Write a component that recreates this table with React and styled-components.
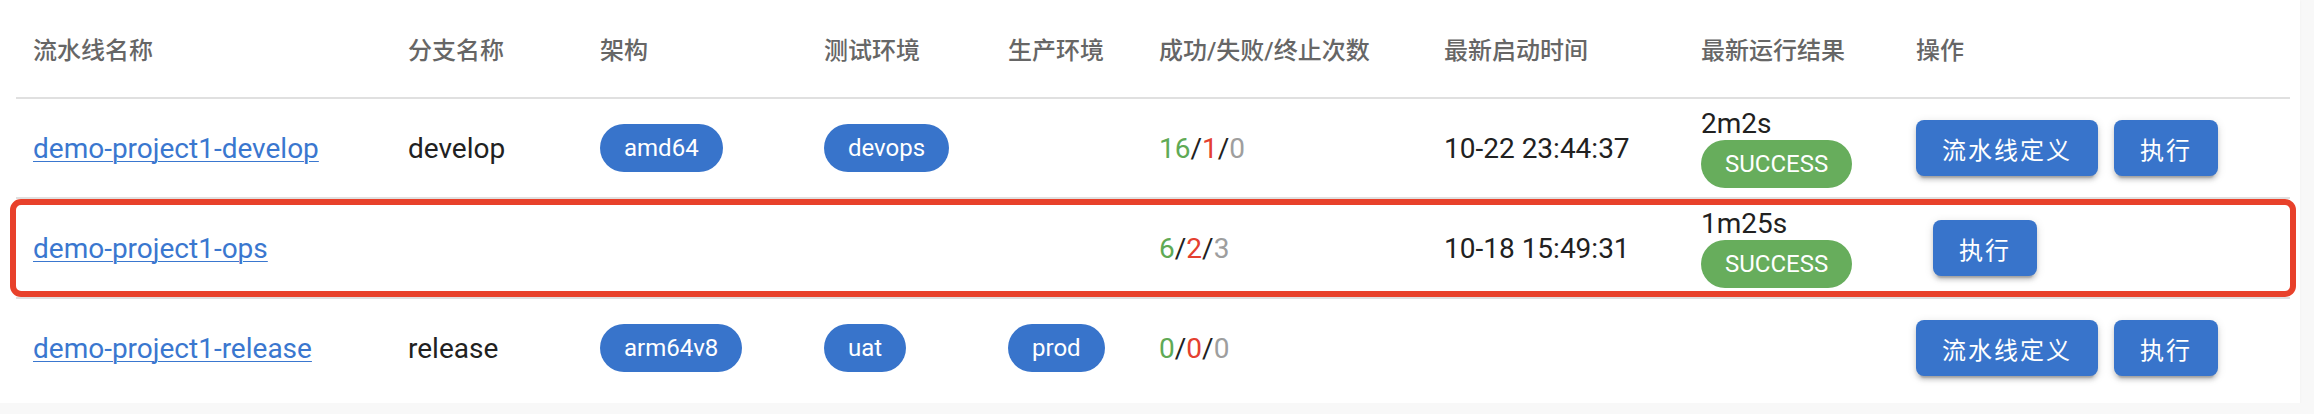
import React from "react";
import styled, { createGlobalStyle } from "styled-components";

const GlobalStyle = createGlobalStyle`
  html, body { margin: 0; padding: 0; background: #f8f8f8; }
  body { font-family: Roboto, "Noto Sans CJK SC", "Noto Sans", sans-serif; }
  * { box-sizing: border-box; }
`;

const COLS = "375px 192px 224px 184px 151px 285px 257px 215px 1fr";

const Card = styled.div`
  width: 2300px;
  background: #ffffff;
  padding: 0 10px 6px 16px;
  box-shadow: 0 1px 3px rgba(0, 0, 0, 0.04);
`;

const Table = styled.div`
  display: flex;
  flex-direction: column;
`;

const HeaderRow = styled.div`
  display: grid;
  grid-template-columns: ${COLS};
  align-items: center;
  height: 99px;
  border-bottom: 2px solid #e0e0e0;
`;

const HeaderCell = styled.div`
  padding-left: 17px;
  font-size: 24px;
  font-weight: 500;
  color: #666666;
  white-space: nowrap;
`;

const BodyRow = styled.div`
  position: relative;
  display: grid;
  grid-template-columns: ${COLS};
  align-items: center;
  height: ${(p) => (p.$last ? "98px" : "100px")};
  border-bottom: ${(p) => (p.$last ? "none" : "2px solid #e0e0e0")};
`;

const Cell = styled.div`
  padding-left: 17px;
  font-size: 28px;
  color: #212121;
  display: flex;
  align-items: center;
  white-space: nowrap;
`;

const NameLink = styled.a`
  color: #3a77cf;
  text-decoration: underline;
  text-decoration-thickness: 1px;
  text-underline-offset: 3px;
  cursor: pointer;
`;

const Chip = styled.span`
  display: inline-flex;
  align-items: center;
  justify-content: center;
  height: 48px;
  padding: 0 24px;
  border-radius: 24px;
  background: ${(p) => (p.$tone === "success" ? "#67ad5c" : "#3874cb")};
  color: #ffffff;
  font-size: 24px;
  line-height: 1;
`;

const Count = styled.span`
  color: ${(p) =>
    p.$kind === "ok" ? "#5faa55" : p.$kind === "fail" ? "#e4402f" : p.$kind === "stop" ? "#9e9e9e" : "#212121"};
`;

const Result = styled.div`
  display: flex;
  flex-direction: column;
  align-items: flex-start;
`;

const Duration = styled.span`
  font-size: 28px;
  line-height: 32px;
  color: #212121;
`;

const Actions = styled.div`
  display: flex;
  gap: 16px;
  margin-left: ${(p) => p.$indent || 0}px;
`;

const ActionButton = styled.button`
  height: 56px;
  padding: 0 26px;
  border: none;
  border-radius: 8px;
  background: #3874cb;
  color: #ffffff;
  font-family: Roboto, "Noto Sans CJK SC", sans-serif;
  font-size: 24px;
  font-weight: 400;
  letter-spacing: 2px;
  cursor: pointer;
  box-shadow: 0 6px 2px -4px rgba(0, 0, 0, 0.2), 0 4px 4px 0 rgba(0, 0, 0, 0.14),
    0 2px 10px 0 rgba(0, 0, 0, 0.12);
`;

const Highlight = styled.div`
  position: absolute;
  left: -6px;
  right: -6px;
  top: 0;
  bottom: 0;
  border: 6px solid #e8412b;
  border-radius: 11px;
  pointer-events: none;
`;

const headers = [
  "流水线名称",
  "分支名称",
  "架构",
  "测试环境",
  "生产环境",
  "成功/失败/终止次数",
  "最新启动时间",
  "最新运行结果",
  "操作",
];

const rows = [
  {
    name: "demo-project1-develop",
    branch: "develop",
    arch: "amd64",
    test: "devops",
    prod: null,
    counts: [16, 1, 0],
    time: "10-22 23:44:37",
    result: { duration: "2m2s", status: "SUCCESS" },
    define: true,
  },
  {
    name: "demo-project1-ops",
    branch: "",
    arch: null,
    test: null,
    prod: null,
    counts: [6, 2, 3],
    time: "10-18 15:49:31",
    result: { duration: "1m25s", status: "SUCCESS" },
    define: false,
    highlight: true,
  },
  {
    name: "demo-project1-release",
    branch: "release",
    arch: "arm64v8",
    test: "uat",
    prod: "prod",
    counts: [0, 0, 0],
    time: "",
    result: null,
    define: true,
  },
];

export default function App() {
  return (
    <>
      <GlobalStyle />
      <Card>
        <Table>
          <HeaderRow>
            {headers.map((h) => (
              <HeaderCell key={h}>{h}</HeaderCell>
            ))}
          </HeaderRow>
          {rows.map((r, i) => (
            <BodyRow key={r.name} $last={i === rows.length - 1}>
              <Cell>
                <NameLink>{r.name}</NameLink>
              </Cell>
              <Cell>{r.branch}</Cell>
              <Cell>{r.arch && <Chip>{r.arch}</Chip>}</Cell>
              <Cell>{r.test && <Chip>{r.test}</Chip>}</Cell>
              <Cell>{r.prod && <Chip>{r.prod}</Chip>}</Cell>
              <Cell>
                <Count $kind="ok">{r.counts[0]}</Count>
                <Count>/</Count>
                <Count $kind="fail">{r.counts[1]}</Count>
                <Count>/</Count>
                <Count $kind="stop">{r.counts[2]}</Count>
              </Cell>
              <Cell>{r.time}</Cell>
              <Cell>
                {r.result && (
                  <Result>
                    <Duration>{r.result.duration}</Duration>
                    <Chip $tone="success">{r.result.status}</Chip>
                  </Result>
                )}
              </Cell>
              <Cell>
                <Actions $indent={r.define ? 0 : 17}>
                  {r.define && <ActionButton>流水线定义</ActionButton>}
                  <ActionButton>执行</ActionButton>
                </Actions>
              </Cell>
              {r.highlight && <Highlight />}
            </BodyRow>
          ))}
        </Table>
      </Card>
    </>
  );
}
